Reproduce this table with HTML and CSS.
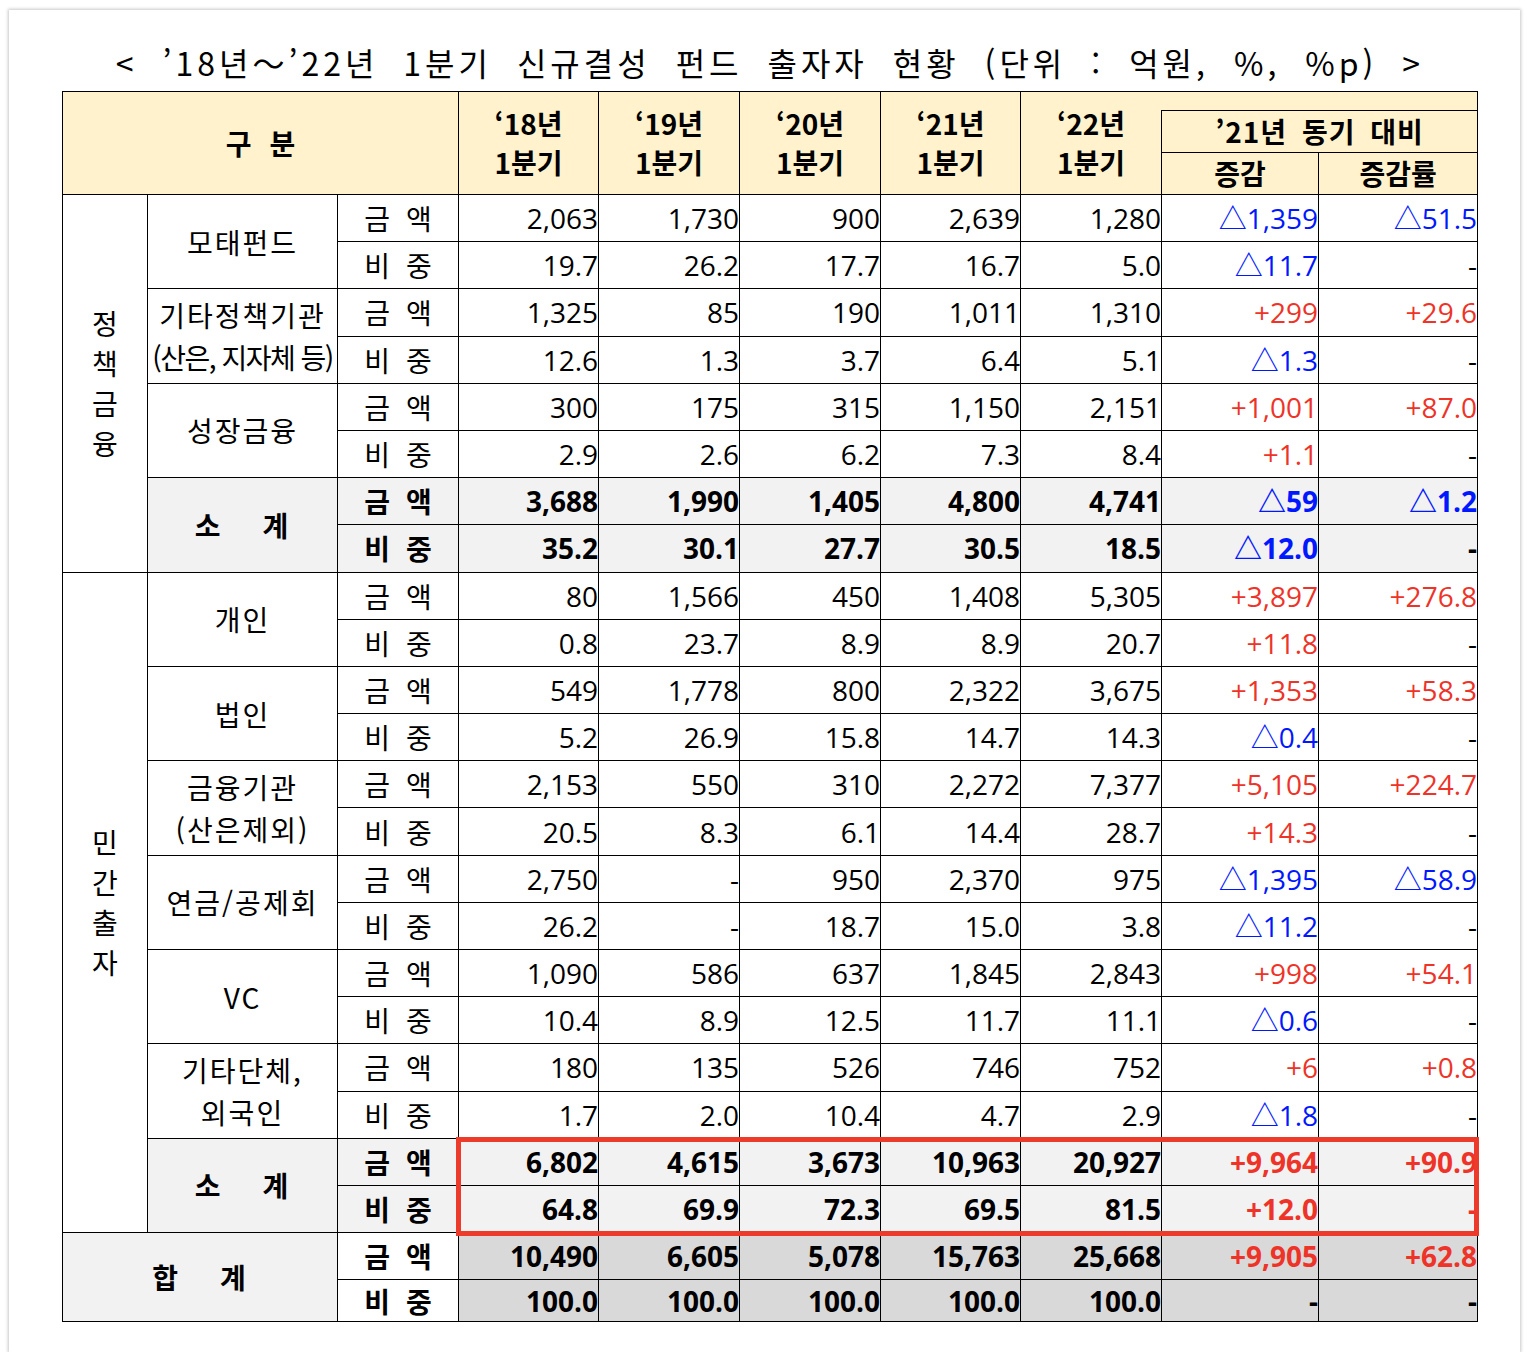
FILE: index.html
```html
<!DOCTYPE html>
<html lang="ko">
<head>
<meta charset="utf-8">
<title>신규결성 펀드 출자자 현황</title>
<link rel="stylesheet" href="styles.css">
</head>
<body>
<div class="card">
  <div class="title">&lt; ’18년～’22년 1분기 신규결성 펀드 출자자 현황 (단위 : 억원, %, %p) &gt;</div>
  <div class="tablewrap">
    <table class="grid">
      <colgroup>
        <col class="c1"><col class="c2"><col class="c3">
        <col class="cy"><col class="cy2"><col class="cy2"><col class="cy"><col class="cy2">
        <col class="cd"><col class="cr">
      </colgroup>
      <thead>
        <tr class="hr1">
          <th colspan="3" rowspan="3" class="gubun">구 분</th>
          <th rowspan="3">‘18년<br>1분기</th>
          <th rowspan="3">‘19년<br>1분기</th>
          <th rowspan="3">‘20년<br>1분기</th>
          <th rowspan="3">‘21년<br>1분기</th>
          <th rowspan="3">‘22년<br>1분기</th>
          <th colspan="2" class="blank"></th>
        </tr>
        <tr class="hr2"><th colspan="2" class="yoy">’21년 동기 대비</th></tr>
        <tr class="hr3"><th>증감</th><th>증감률</th></tr>
      </thead>
      <tbody>
        <tr>
          <td rowspan="8" class="vert">정<br>책<br>금<br>융</td>
          <td rowspan="2" class="lab">모태펀드</td>
          <td class="kind">금 액</td>
          <td>2,063</td><td>1,730</td><td>900</td><td>2,639</td><td>1,280</td>
          <td class="b">△1,359</td><td class="b">△51.5</td>
        </tr>
        <tr>
          <td class="kind">비 중</td>
          <td>19.7</td><td>26.2</td><td>17.7</td><td>16.7</td><td>5.0</td>
          <td class="b">△11.7</td><td>-</td>
        </tr>
        <tr>
          <td rowspan="2" class="lab two">기타정책기관<br><span class="squeeze">(산은, 지자체 등)</span></td>
          <td class="kind">금 액</td>
          <td>1,325</td><td>85</td><td>190</td><td>1,011</td><td>1,310</td>
          <td class="r">+299</td><td class="r">+29.6</td>
        </tr>
        <tr>
          <td class="kind">비 중</td>
          <td>12.6</td><td>1.3</td><td>3.7</td><td>6.4</td><td>5.1</td>
          <td class="b">△1.3</td><td>-</td>
        </tr>
        <tr>
          <td rowspan="2" class="lab">성장금융</td>
          <td class="kind">금 액</td>
          <td>300</td><td>175</td><td>315</td><td>1,150</td><td>2,151</td>
          <td class="r">+1,001</td><td class="r">+87.0</td>
        </tr>
        <tr>
          <td class="kind">비 중</td>
          <td>2.9</td><td>2.6</td><td>6.2</td><td>7.3</td><td>8.4</td>
          <td class="r">+1.1</td><td>-</td>
        </tr>
        <tr class="sub">
          <td rowspan="2" class="lab sum">소 계</td>
          <td class="kind">금 액</td>
          <td>3,688</td><td>1,990</td><td>1,405</td><td>4,800</td><td>4,741</td>
          <td class="b">△59</td><td class="b">△1.2</td>
        </tr>
        <tr class="sub">
          <td class="kind">비 중</td>
          <td>35.2</td><td>30.1</td><td>27.7</td><td>30.5</td><td>18.5</td>
          <td class="b">△12.0</td><td>-</td>
        </tr>

        <tr>
          <td rowspan="14" class="vert">민<br>간<br>출<br>자</td>
          <td rowspan="2" class="lab">개인</td>
          <td class="kind">금 액</td>
          <td>80</td><td>1,566</td><td>450</td><td>1,408</td><td>5,305</td>
          <td class="r">+3,897</td><td class="r">+276.8</td>
        </tr>
        <tr>
          <td class="kind">비 중</td>
          <td>0.8</td><td>23.7</td><td>8.9</td><td>8.9</td><td>20.7</td>
          <td class="r">+11.8</td><td>-</td>
        </tr>
        <tr>
          <td rowspan="2" class="lab">법인</td>
          <td class="kind">금 액</td>
          <td>549</td><td>1,778</td><td>800</td><td>2,322</td><td>3,675</td>
          <td class="r">+1,353</td><td class="r">+58.3</td>
        </tr>
        <tr>
          <td class="kind">비 중</td>
          <td>5.2</td><td>26.9</td><td>15.8</td><td>14.7</td><td>14.3</td>
          <td class="b">△0.4</td><td>-</td>
        </tr>
        <tr>
          <td rowspan="2" class="lab two">금융기관<br>(산은제외)</td>
          <td class="kind">금 액</td>
          <td>2,153</td><td>550</td><td>310</td><td>2,272</td><td>7,377</td>
          <td class="r">+5,105</td><td class="r">+224.7</td>
        </tr>
        <tr>
          <td class="kind">비 중</td>
          <td>20.5</td><td>8.3</td><td>6.1</td><td>14.4</td><td>28.7</td>
          <td class="r">+14.3</td><td>-</td>
        </tr>
        <tr>
          <td rowspan="2" class="lab">연금/공제회</td>
          <td class="kind">금 액</td>
          <td>2,750</td><td>-</td><td>950</td><td>2,370</td><td>975</td>
          <td class="b">△1,395</td><td class="b">△58.9</td>
        </tr>
        <tr>
          <td class="kind">비 중</td>
          <td>26.2</td><td>-</td><td>18.7</td><td>15.0</td><td>3.8</td>
          <td class="b">△11.2</td><td>-</td>
        </tr>
        <tr>
          <td rowspan="2" class="lab">VC</td>
          <td class="kind">금 액</td>
          <td>1,090</td><td>586</td><td>637</td><td>1,845</td><td>2,843</td>
          <td class="r">+998</td><td class="r">+54.1</td>
        </tr>
        <tr>
          <td class="kind">비 중</td>
          <td>10.4</td><td>8.9</td><td>12.5</td><td>11.7</td><td>11.1</td>
          <td class="b">△0.6</td><td>-</td>
        </tr>
        <tr>
          <td rowspan="2" class="lab two">기타단체,<br>외국인</td>
          <td class="kind">금 액</td>
          <td>180</td><td>135</td><td>526</td><td>746</td><td>752</td>
          <td class="r">+6</td><td class="r">+0.8</td>
        </tr>
        <tr>
          <td class="kind">비 중</td>
          <td>1.7</td><td>2.0</td><td>10.4</td><td>4.7</td><td>2.9</td>
          <td class="b">△1.8</td><td>-</td>
        </tr>
        <tr class="sub">
          <td rowspan="2" class="lab sum">소 계</td>
          <td class="kind">금 액</td>
          <td>6,802</td><td>4,615</td><td>3,673</td><td>10,963</td><td>20,927</td>
          <td class="r">+9,964</td><td class="r">+90.9</td>
        </tr>
        <tr class="sub">
          <td class="kind">비 중</td>
          <td>64.8</td><td>69.9</td><td>72.3</td><td>69.5</td><td>81.5</td>
          <td class="r">+12.0</td><td class="r">-</td>
        </tr>

        <tr class="tot">
          <td colspan="2" rowspan="2" class="lab sum total">합 계</td>
          <td class="kind">금 액</td>
          <td>10,490</td><td>6,605</td><td>5,078</td><td>15,763</td><td>25,668</td>
          <td class="r">+9,905</td><td class="r">+62.8</td>
        </tr>
        <tr class="tot last">
          <td class="kind">비 중</td>
          <td>100.0</td><td>100.0</td><td>100.0</td><td>100.0</td><td>100.0</td>
          <td>-</td><td>-</td>
        </tr>
      </tbody>
    </table>
    <div class="highlight"></div>
  </div>
</div>
</body>
</html>
```

FILE: styles.css
```css
html, body {
  margin: 0;
  padding: 0;
  background: #ffffff;
}

.card {
  margin: 10px 0 0 9px;
  width: 1511px;
  height: 1342px;
  box-sizing: border-box;
  padding: 32px 0 0 53px;
  background: #ffffff;
  box-shadow: 0 0 3px 1px rgba(0, 0, 0, 0.22);
}

.title {
  width: 1416px;
  height: 40px;
  margin-bottom: 9px;
  text-align: center;
  font-family: "Noto Sans CJK KR", sans-serif;
  font-size: 32px;
  line-height: 40px;
  letter-spacing: 4px;
  word-spacing: 12px;
  color: #000;
  white-space: nowrap;
}

.tablewrap {
  position: relative;
  width: 1416px;
}

.grid {
  border-collapse: collapse;
  table-layout: fixed;
  width: 1416px;
  font-family: "Open Sans", "Noto Sans CJK KR", sans-serif;
  font-size: 28px;
  color: #000;
}

.c1 { width: 85px; }
.c2 { width: 190px; }
.c3 { width: 121px; }
.cy { width: 140px; }
.cy2 { width: 141px; }
.cd { width: 157px; }
.cr { width: 159px; }

.grid th,
.grid td {
  border: 1px solid #000;
  padding: 0;
  overflow: visible;
  white-space: nowrap;
}

.grid th {
  background: #fff2cc;
  font-family: "Noto Sans CJK KR", sans-serif;
  font-weight: 700;
  font-size: 28px;
  line-height: 39px;
  text-align: center;
  vertical-align: middle;
}

.hr1 { height: 19px; }
.hr2 { height: 42px; }
.hr3 { height: 42px; }

.grid th.blank {
  border-left-style: hidden;
}

.grid th.gubun {
  word-spacing: 10px;
}

.grid th.yoy {
  word-spacing: 6px;
  letter-spacing: 1px;
}

.grid tbody tr {
  height: 47.2px;
}

.grid tbody tr.last {
  height: 42px;
}

.grid td {
  text-align: right;
  vertical-align: middle;
  line-height: 40px;
}

.grid td.vert,
.grid td.lab,
.grid td.kind {
  text-align: center;
  font-family: "Noto Sans CJK KR", sans-serif;
  background: #ffffff;
}

.grid td.vert {
  line-height: 40px;
}

.grid td.lab {
  letter-spacing: 2px;
}

.grid td.lab.two {
  line-height: 42px;
}

.squeeze {
  letter-spacing: -1.5px;
  word-spacing: 0;
}

.grid td.kind {
  word-spacing: 8px;
}

.grid td.sum {
  font-weight: 700;
  word-spacing: 30px;
}

.grid tr.sub td {
  background: #f2f2f2;
  font-weight: 700;
}

.grid td.lab.sum {
  background: #f2f2f2;
}

.grid tr.tot td {
  background: #d9d9d9;
  font-weight: 700;
}

.grid tr.sub td.kind {
  background: #f2f2f2;
}

.grid tr.tot td.kind {
  background: #ffffff;
}

.grid td.total {
  background: #d9d9d9;
}

.r { color: #ee3328; }
.b { color: #0018ff; }

.highlight {
  position: absolute;
  left: 394px;
  top: 1046px;
  width: 1023px;
  height: 99px;
  box-sizing: border-box;
  border: 5px solid #ec3a2b;
  pointer-events: none;
}
```
